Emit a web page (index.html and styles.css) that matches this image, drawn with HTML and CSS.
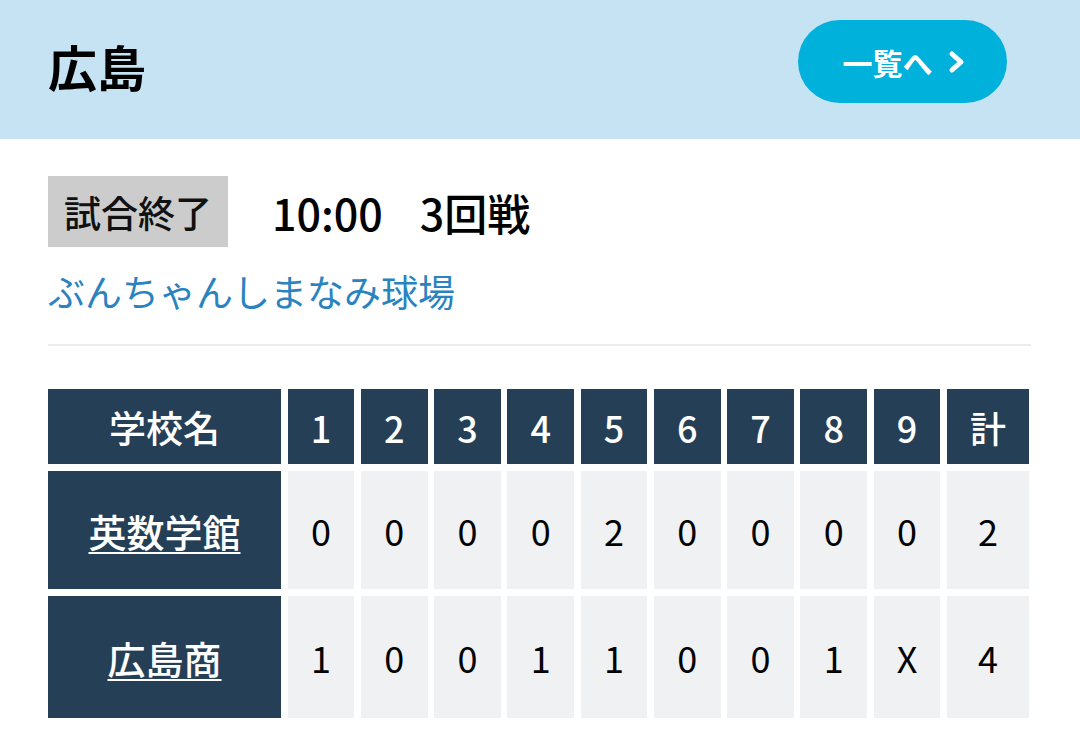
FILE: index.html
```html
<!DOCTYPE html>
<html lang="ja">
<head>
<meta charset="utf-8">
<link rel="stylesheet" href="styles.css">
</head>
<body>
<header class="top">
  <h1 class="pref">広島</h1>
  <a class="list-btn" href="#">一覧へ<svg class="chev" width="20" height="24" viewBox="0 0 20 24"><path d="M5 4 L14 12 L5 20" fill="none" stroke="#fff" stroke-width="5" stroke-linecap="round" stroke-linejoin="round"/></svg></a>
</header>
<main class="content">
  <div class="status-row">
    <span class="badge">試合終了</span>
    <span class="time">10:00<span class="sp">　</span>3回戦</span>
  </div>
  <div class="venue">ぶんちゃんしまなみ球場</div>
  <hr class="rule">
  <div class="score">
    <div class="hd name">学校名</div>
    <div class="hd">1</div><div class="hd">2</div><div class="hd">3</div><div class="hd">4</div><div class="hd">5</div><div class="hd">6</div><div class="hd">7</div><div class="hd">8</div><div class="hd">9</div><div class="hd">計</div>
    <div class="team"><a href="#">英数学館</a></div>
    <div class="cell">0</div><div class="cell">0</div><div class="cell">0</div><div class="cell">0</div><div class="cell">2</div><div class="cell">0</div><div class="cell">0</div><div class="cell">0</div><div class="cell">0</div><div class="cell">2</div>
    <div class="team"><a href="#">広島商</a></div>
    <div class="cell">1</div><div class="cell">0</div><div class="cell">0</div><div class="cell">1</div><div class="cell">1</div><div class="cell">0</div><div class="cell">0</div><div class="cell">1</div><div class="cell">X</div><div class="cell">4</div>
  </div>
</main>
</body>
</html>
```

FILE: styles.css
```css
* { box-sizing: border-box; }
html, body { margin: 0; padding: 0; }
body {
  width: 1080px;
  background: #fff;
  font-family: "Noto Sans CJK JP", "Noto Sans", sans-serif;
  color: #111;
}
.top {
  height: 139px;
  background: #c6e3f3;
  display: flex;
  align-items: center;
  justify-content: space-between;
  padding: 0 73px 0 48px;
}
.pref {
  margin: 0;
  font-size: 49px;
  font-weight: 700;
  line-height: 1;
  color: #000;
  position: relative;
  top: -4px;
}
.list-btn {
  width: 209px;
  height: 83px;
  margin-top: -16px;
  border-radius: 42px;
  background: #00b1dc;
  color: #fff;
  text-decoration: none;
  font-size: 30px;
  font-weight: 700;
  display: flex;
  align-items: center;
  justify-content: center;
  gap: 14px;
  padding-left: 4px;
}
.chev { display: block; }
.content {
  padding: 37px 49px 0 48px;
}
.status-row {
  display: flex;
  align-items: center;
  gap: 44px;
}
.badge {
  display: inline-flex;
  align-items: center;
  justify-content: center;
  width: 180px;
  height: 71px;
  background: #cccccc;
  font-size: 37px;
  font-weight: 500;
  color: #111;
}
.time {
  font-size: 43px;
  font-weight: 500;
  color: #000;
}
.time .sp { letter-spacing: -6px; }
.venue {
  margin-top: 18px;
  font-size: 37px;
  line-height: 52px;
  color: #2a83bf;
}
.rule {
  border: 0;
  height: 2px;
  background: #ececec;
  margin: 27px 0 43px;
}
.score {
  display: grid;
  grid-template-columns: 233px repeat(9, 1fr) 82px;
  grid-template-rows: 75px 118px 122px;
  column-gap: 6.6px;
  row-gap: 7px;
  width: 981px;
}
.hd, .team, .cell {
  display: flex;
  align-items: center;
  justify-content: center;
  font-size: 36px;
}
.hd {
  background: #253f56;
  color: #fff;
  font-weight: 500;
}
.hd.name { font-size: 37px; }
.team {
  background: #253f56;
}
.team a {
  color: #fff;
  font-size: 38px;
  font-weight: 500;
  text-decoration: underline;
  text-decoration-thickness: 2px;
  text-underline-offset: 5px;
}
.cell {
  background: #f0f1f3;
  color: #000;
}
```
